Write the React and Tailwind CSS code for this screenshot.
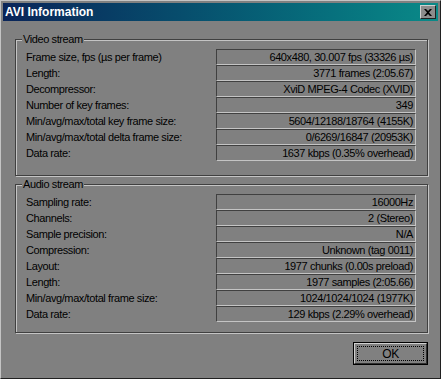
const videoRows = [
  ["Frame size, fps (µs per frame)", "640x480, 30.007 fps (33326 µs)"],
  ["Length:", "3771 frames (2:05.67)"],
  ["Decompressor:", "XviD MPEG-4 Codec (XVID)"],
  ["Number of key frames:", "349"],
  ["Min/avg/max/total key frame size:", "5604/12188/18764 (4155K)"],
  ["Min/avg/max/total delta frame size:", "0/6269/16847 (20953K)"],
  ["Data rate:", "1637 kbps (0.35% overhead)"],
];

const audioRows = [
  ["Sampling rate:", "16000Hz"],
  ["Channels:", "2 (Stereo)"],
  ["Sample precision:", "N/A"],
  ["Compression:", "Unknown (tag 0011)"],
  ["Layout:", "1977 chunks (0.00s preload)"],
  ["Length:", "1977 samples (2:05.66)"],
  ["Min/avg/max/total frame size:", "1024/1024/1024 (1977K)"],
  ["Data rate:", "129 kbps (2.29% overhead)"],
];

function InfoRow({ label, value }) {
  return (
    <div className="flex items-center h-[16px]">
      <div className="flex-1 pl-[10px] whitespace-nowrap">{label}</div>
      <div className="w-[200px] h-[16px] mr-[11px] border border-t-[#404040] border-l-[#404040] border-b-[#c4c4c4] border-r-[#c4c4c4] flex items-center justify-end pr-[2px] whitespace-nowrap leading-none">
        {value}
      </div>
    </div>
  );
}

function Group({ title, rows, className }) {
  return (
    <fieldset
      className={
        "ml-[12px] w-[413px] border border-[#404040] shadow-[inset_1px_1px_0_#c4c4c4,1px_1px_0_#c4c4c4] " +
        className
      }
    >
      <legend className="ml-[6px] px-[1px] bg-[#808080] leading-[13px]">{title}</legend>
      <div className="flex flex-col">
        {rows.map(([label, value]) => (
          <InfoRow key={label + value} label={label} value={value} />
        ))}
      </div>
    </fieldset>
  );
}

export default function App() {
  return (
    <div className="w-[441px] h-[379px] bg-[#808080] border border-t-[#c4c4c4] border-l-[#c4c4c4] border-b-[#202020] border-r-[#202020] p-[2px] text-[11px] tracking-[-0.4px] text-black font-['Liberation_Sans',Arial,sans-serif]">
      <div className="h-full flex flex-col">
        <div className="h-[18px] flex items-center justify-between bg-gradient-to-r from-[#0a2458] to-[#0a8a88] pl-[2px] pr-[2px]">
          <span className="text-white font-bold text-[12px] tracking-normal">AVI Information</span>
          <div className="w-[16px] h-[14px] bg-[#8c8c8c] border border-t-[#d0d0d0] border-l-[#d0d0d0] border-b-[#202020] border-r-[#202020] flex items-center justify-center">
            <svg width="8" height="7" viewBox="0 0 8 7">
              <path d="M0 0h2l2 2 2-2h2L5 3.5 8 7H6L4 5 2 7H0l3-3.5z" fill="#000" />
            </svg>
          </div>
        </div>

        <Group title="Video stream" rows={videoRows} className="mt-[12px] pt-[3px] pb-[14px]" />
        <Group title="Audio stream" rows={audioRows} className="mt-[2px] pt-[3px] pb-[10px]" />

        <div className="flex justify-end pr-[10px] mt-[9px]">
          <button className="w-[75px] h-[23px] border border-black">
            <div className="h-full border border-t-[#d0d0d0] border-l-[#d0d0d0] border-b-[#303030] border-r-[#303030] p-[2px]">
              <div className="h-full border border-dotted border-black flex items-center justify-center text-[12px]">
                OK
              </div>
            </div>
          </button>
        </div>
      </div>
    </div>
  );
}
